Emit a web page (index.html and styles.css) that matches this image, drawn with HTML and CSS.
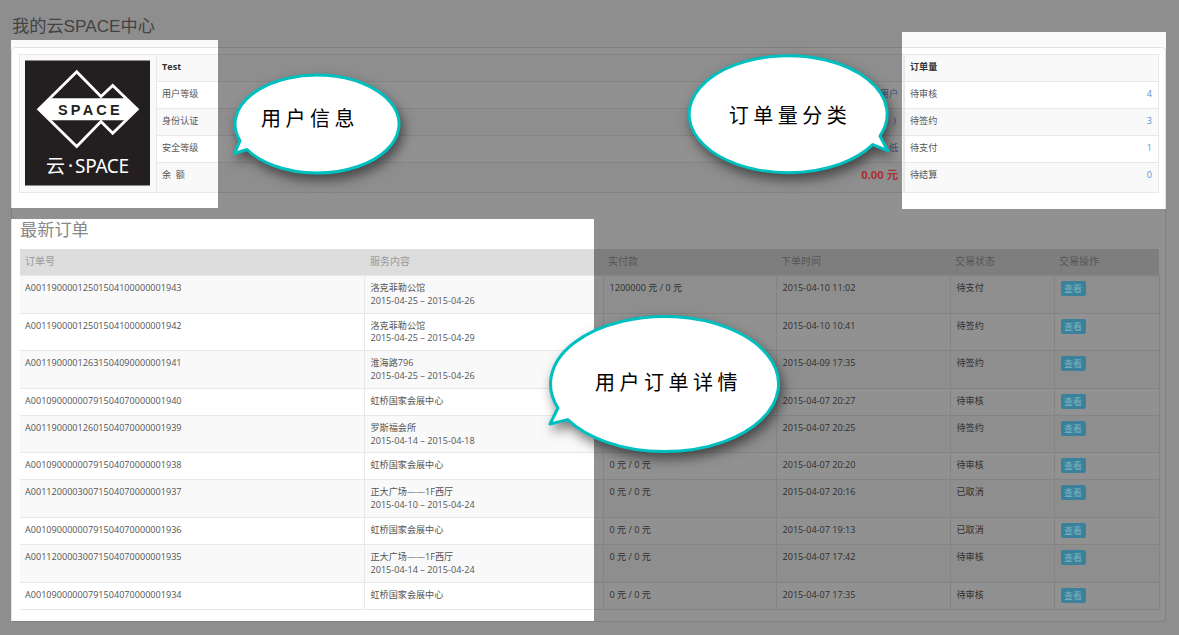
FILE: index.html
```html
<!DOCTYPE html>
<html lang="zh-CN">
<head>
    <meta charset="UTF-8">
    <title>我的云SPACE中心</title>
    <link rel="stylesheet" href="styles.css">
</head>
<body>

<div class="page">
    <h1 class="page-title">我的云SPACE中心</h1>

    <div class="panel">
        <div class="summary">
            <table class="info-table">
                <tr>
                    <td class="logo-cell" rowspan="5">
                        <svg class="logo" viewBox="0 0 125 125">
                            <rect width="125" height="125" fill="#231f20"/>
                            <path d="M13.7 48.7L51.7 11.3L76 36L87.7 25L112.3 48.7L87.7 72.7L76 61L51.7 86Z" fill="none" stroke="#fff" stroke-width="2.8"/>
                            <path d="M13.7 48.7L24.7 37.7H101.3L112.3 48.7L101.3 59.7H24.7Z" fill="#fff"/>
                            <text class="logo-mark" x="33" y="54">SPACE</text>
                            <text class="logo-name" x="21" y="112">云<tspan dx="3">·</tspan><tspan dx="2" textLength="54">SPACE</tspan></text>
                        </svg>
                    </td>
                    <td class="user-name" colspan="2">Test</td>
                </tr>
                <tr>
                    <td class="label">用户等级</td>
                    <td class="value"><a>普通用户</a></td>
                </tr>
                <tr>
                    <td class="label">身份认证</td>
                    <td class="value"><a>未认证&nbsp;&nbsp;&nbsp;)&nbsp;</a></td>
                </tr>
                <tr>
                    <td class="label">安全等级</td>
                    <td class="value"><a>低</a></td>
                </tr>
                <tr>
                    <td class="label">余&nbsp;&nbsp;额</td>
                    <td class="value"><span class="money">0.00 元</span></td>
                </tr>
            </table>

            <table class="count-table">
                <tr>
                    <td class="user-name" colspan="2">订单量</td>
                </tr>
                <tr>
                    <td class="label">待审核</td>
                    <td class="value"><a>4</a></td>
                </tr>
                <tr>
                    <td class="label">待签约</td>
                    <td class="value"><a>3</a></td>
                </tr>
                <tr>
                    <td class="label">待支付</td>
                    <td class="value"><a>1</a></td>
                </tr>
                <tr>
                    <td class="label">待结算</td>
                    <td class="value"><a>0</a></td>
                </tr>
            </table>
        </div>

        <h2 class="section-title">最新订单</h2>

        <table class="order-table">
            <colgroup>
                <col class="col-no">
                <col class="col-service">
                <col class="col-paid">
                <col class="col-time">
                <col class="col-status">
                <col class="col-action">
            </colgroup>
            <tr>
                <th>订单号</th>
                <th>服务内容</th>
                <th>实付款</th>
                <th>下单时间</th>
                <th>交易状态</th>
                <th>交易操作</th>
            </tr>
            <tr>
                <td>A00119000012501504100000001943</td>
                <td>洛克菲勒公馆<br>2015-04-25 – 2015-04-26</td>
                <td>1200000 元 / 0 元</td>
                <td>2015-04-10 11:02</td>
                <td>待支付</td>
                <td><a class="btn-view">查看</a></td>
            </tr>
            <tr>
                <td>A00119000012501504100000001942</td>
                <td>洛克菲勒公馆<br>2015-04-25 – 2015-04-29</td>
                <td></td>
                <td>2015-04-10 10:41</td>
                <td>待签约</td>
                <td><a class="btn-view">查看</a></td>
            </tr>
            <tr>
                <td>A00119000012631504090000001941</td>
                <td>淮海路796<br>2015-04-25 – 2015-04-26</td>
                <td></td>
                <td>2015-04-09 17:35</td>
                <td>待签约</td>
                <td><a class="btn-view">查看</a></td>
            </tr>
            <tr>
                <td>A00109000000791504070000001940</td>
                <td>虹桥国家会展中心</td>
                <td></td>
                <td>2015-04-07 20:27</td>
                <td>待审核</td>
                <td><a class="btn-view">查看</a></td>
            </tr>
            <tr>
                <td>A00119000012601504070000001939</td>
                <td>罗斯福会所<br>2015-04-14 – 2015-04-18</td>
                <td></td>
                <td>2015-04-07 20:25</td>
                <td>待签约</td>
                <td><a class="btn-view">查看</a></td>
            </tr>
            <tr>
                <td>A00109000000791504070000001938</td>
                <td>虹桥国家会展中心</td>
                <td>0 元 / 0 元</td>
                <td>2015-04-07 20:20</td>
                <td>待审核</td>
                <td><a class="btn-view">查看</a></td>
            </tr>
            <tr>
                <td>A00112000030071504070000001937</td>
                <td>正大广场——1F西厅<br>2015-04-10 – 2015-04-24</td>
                <td>0 元 / 0 元</td>
                <td>2015-04-07 20:16</td>
                <td>已取消</td>
                <td><a class="btn-view">查看</a></td>
            </tr>
            <tr>
                <td>A00109000000791504070000001936</td>
                <td>虹桥国家会展中心</td>
                <td>0 元 / 0 元</td>
                <td>2015-04-07 19:13</td>
                <td>已取消</td>
                <td><a class="btn-view">查看</a></td>
            </tr>
            <tr>
                <td>A00112000030071504070000001935</td>
                <td>正大广场——1F西厅<br>2015-04-14 – 2015-04-24</td>
                <td>0 元 / 0 元</td>
                <td>2015-04-07 17:42</td>
                <td>待审核</td>
                <td><a class="btn-view">查看</a></td>
            </tr>
            <tr>
                <td>A00109000000791504070000001934</td>
                <td>虹桥国家会展中心</td>
                <td>0 元 / 0 元</td>
                <td>2015-04-07 17:35</td>
                <td>待审核</td>
                <td><a class="btn-view">查看</a></td>
            </tr>
        </table>
    </div>
</div>

<!-- dim layer, the three highlighted areas are holes in its clip-path -->
<div class="dim"></div>

<div class="bubble bubble-user">
    <svg viewBox="0 0 175 110"><path d="M10 70.8L4.5 83.5L17 79.5A82 49 0 1 0 10 70.8Z"/></svg>
    <span>用户信息</span>
</div>

<div class="bubble bubble-count">
    <svg viewBox="0 0 210 130"><path d="M196 86L203.7 100.7L188.7 94.6A99 58.5 0 1 1 196 86Z"/></svg>
    <span>订单量分类</span>
</div>

<div class="bubble bubble-orders">
    <svg viewBox="0 0 240 150"><path d="M13 97L5 113L22.7 108.6A114 67.5 0 1 0 13 97Z"/></svg>
    <span>用户订单详情</span>
</div>

</body>
</html>
```

FILE: styles.css
```css
html, body {
    margin: 0;
    height: 635px;
    overflow: hidden;
}

body {
    position: relative;
    background-color: #fafafa;
    font-family: "Open Sans", "Noto Sans CJK SC", sans-serif;
    font-size: 9.1px;
    line-height: 12.8px;
    color: #555;
}

.page {
    padding: 16px 13px 0 11px;
}

.page-title {
    margin: 0 0 11px 1px;
    font-family: "Liberation Sans", "Noto Sans CJK SC", sans-serif;
    font-size: 17.2px;
    line-height: 20px;
    font-weight: 400;
    color: #777;
}

.panel {
    background-color: #fff;
    border: 1px solid #e2e2e2;
    border-radius: 4px;
    height: 575px;
    box-sizing: border-box;
    padding: 6px 6px 0 7px;
}

.summary {
    display: flex;
}

table {
    border-collapse: collapse;
}

td, th {
    border: 1px solid #e8e8e8;
    padding: 6px 6px 5px;
    text-align: left;
    vertical-align: top;
    font-weight: 400;
}

.info-table {
    width: 885px;
}

.count-table {
    width: 255px;
}

.info-table tr,
.count-table tr {
    height: 27px;
}

.info-table tr:last-child,
.count-table tr:last-child {
    height: 30px;
}

.info-table tr:nth-child(odd) td,
.count-table tr:nth-child(odd) td {
    background-color: #f9f9f9;
}

.logo-cell {
    width: 125px;
    padding: 5px 6px 0 5px;
}

.logo {
    display: block;
    width: 125px;
    height: 126px;
}

.logo-mark {
    font-family: "Liberation Sans", sans-serif;
    font-size: 14.5px;
    font-weight: 700;
    letter-spacing: 3.2px;
    fill: #231f20;
}

.logo-name {
    font-family: "Noto Sans", "Noto Sans CJK SC", sans-serif;
    font-size: 19px;
    fill: #fff;
}

.user-name {
    font-weight: 700;
    color: #333;
    padding-left: 5px;
}

.label {
    border-right: 0;
    width: 120px;
    padding-left: 5px;
}

.value {
    border-left: 0;
    text-align: right;
}

.info-table .value {
    padding-right: 5px;
}

.value a {
    color: #5b93d0;
}

/* sits above the dim layer, the colours are the dimmed ones */
.money {
    position: relative;
    z-index: 2;
    font-size: 11.3px;
    font-weight: 700;
    color: #a83232;
}

.section-title {
    margin: 27px 0 9px 1px;
    font-family: "Liberation Sans", "Noto Sans CJK SC", sans-serif;
    font-size: 17.2px;
    line-height: 20px;
    font-weight: 400;
    color: #888;
}

.order-table {
    width: 1139px;
    margin-left: 1px;
    table-layout: fixed;
}

.col-no {
    width: 344px;
}

.col-service {
    width: 239px;
}

.col-paid {
    width: 173px;
}

.col-time {
    width: 174px;
}

.col-status {
    width: 104px;
}

.col-action {
    width: 105px;
}

.order-table th {
    background-color: #ddd;
    border: 0;
    height: 15px;
    font-size: 10px;
    color: #999;
    padding: 6px 5px 5px;
}

.order-table th:nth-child(2) {
    padding-left: 6px;
}

.order-table td:first-child {
    border-left: 0;
    padding-left: 5px;
}

.order-table tr:nth-child(even) td {
    background-color: #f9f9f9;
}

.btn-view {
    display: block;
    position: relative;
    z-index: 2;
    width: 25px;
    height: 15px;
    margin-top: -1px;
    margin-bottom: 1px;
    background-color: #3a829c;
    border-radius: 2px;
    font-size: 9px;
    line-height: 15px;
    text-align: center;
    color: #7fb2c2;
}

.dim {
    position: absolute;
    top: 0;
    left: 0;
    width: 1179px;
    height: 635px;
    background-color: rgba(0, 0, 0, 0.43);
    clip-path: path(evenodd, "M0 0H1179V635H0Z M11 40H218V208H11Z M902 32H1166V209H902Z M11 219H594V621H11Z");
}

.bubble {
    position: absolute;
    z-index: 3;
    display: flex;
    align-items: center;
    justify-content: center;
    font-family: "Noto Sans CJK SC", sans-serif;
    color: #000;
}

.bubble svg {
    position: absolute;
    top: 0;
    left: 0;
    width: 100%;
    height: 100%;
    overflow: visible;
    filter: drop-shadow(3px 6px 6px rgba(0, 0, 0, 0.5));
}

.bubble path {
    fill: #fff;
    stroke: #00bfbf;
    stroke-width: 3;
    stroke-linejoin: round;
}

.bubble span {
    position: relative;
    font-size: 20px;
    line-height: 24px;
    letter-spacing: 4.5px;
}

.bubble-user {
    left: 230px;
    top: 70px;
    width: 175px;
    height: 110px;
}

.bubble-user span {
    margin: 0 15px 14px 0;
}

.bubble-count {
    left: 684px;
    top: 50px;
    width: 210px;
    height: 130px;
}

.bubble-count span {
    margin-left: 2px;
}

.bubble-orders {
    left: 545px;
    top: 311px;
    width: 240px;
    height: 150px;
}

.bubble-orders span {
    margin: 0 0 8px 7px;
}
```
